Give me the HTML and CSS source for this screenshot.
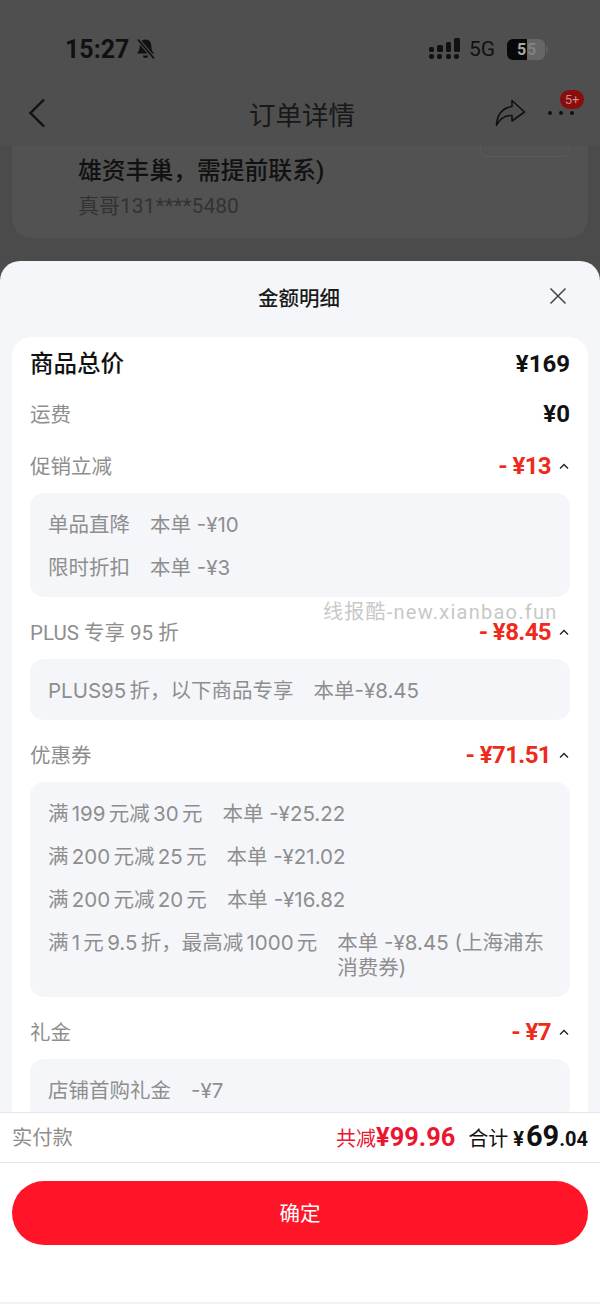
FILE: index.html
```html
<!DOCTYPE html>
<html lang="zh-CN">
<head>
    <meta charset="UTF-8">
    <meta name="viewport" content="width=device-width, initial-scale=1.0">
    <title>金额明细</title>
    <link rel="stylesheet" href="styles.css">
</head>
<body>
    <div class="phone">
        <!-- dimmed page behind the sheet -->
        <div class="status-bar">
            <div class="status-left">
                <span class="clock">15:27</span>
                <svg class="bell" width="21" height="22" viewBox="0 0 21 22">
                    <path d="M10.5 1.5c-3.8 0-5.8 2.8-5.8 6.500 0 3.800-1.200 5.500-2.900 7.500h17.400c-1.700-2-2.900-3.700-2.900-7.500 0-3.700-2-6.500-5.800-6.500z" fill="#111"/>
                    <path d="M8 17.5h5a2.500 2.500 0 0 1-5 0z" fill="#111"/>
                    <path d="M3 1.500l16 19" stroke="#4f4f4f" stroke-width="3.600"/>
                    <path d="M3 1.500l16 19" stroke="#111" stroke-width="1.800"/>
                </svg>
            </div>
            <div class="status-right">
                <svg class="signal" width="31" height="22" viewBox="0 0 31 22">
                    <g fill="#111">
                        <rect x="0" y="9" width="5" height="5" rx="1.500"/>
                        <rect x="8" y="7" width="6" height="7" rx="1.500"/>
                        <rect x="17" y="4" width="5" height="10" rx="1.500"/>
                        <rect x="25" y="0" width="6" height="14" rx="1.500"/>
                        <rect x="0" y="16" width="5" height="5" rx="2"/>
                        <rect x="8" y="16" width="5" height="5" rx="2"/>
                        <rect x="17" y="16" width="5" height="5" rx="2"/>
                        <rect x="25" y="16" width="5" height="5" rx="2"/>
                    </g>
                </svg>
                <span class="net">5G</span>
                <div class="battery">
                    <span class="battery-fill">5</span><span class="battery-rest">5</span>
                </div>
                <span class="battery-cap"></span>
            </div>
        </div>

        <div class="nav">
            <svg class="back" width="18" height="30" viewBox="0 0 18 30">
                <path d="M16 1.500L2.500 15 16 28.500" fill="none" stroke="#111" stroke-width="2.400"/>
            </svg>
            <div class="nav-title">订单详情</div>
            <svg class="share" width="31" height="28" viewBox="0 0 31 28">
                <path d="M17 1.500L29.500 13 17 22v-5.500C10 16 5 19.500 1.500 26.500 2 16 7 9 17 7.500z" fill="none" stroke="#111" stroke-width="1.600" stroke-linejoin="round"/>
            </svg>
            <div class="more">
                <i></i><i></i><i></i>
                <span class="badge">5+</span>
            </div>
        </div>

        <div class="page">
            <div class="ghost-button"></div>
            <div class="address-card">
                <div class="address">雄资丰巢，需提前联系)</div>
                <div class="contact">真哥131****5480</div>
            </div>
        </div>

        <!-- bottom sheet -->
        <div class="sheet">
            <div class="sheet-head">
                <div class="sheet-title">金额明细</div>
                <svg class="close" width="18" height="18" viewBox="0 0 18 18">
                    <path d="M1.500 1.500l15 15M16.500 1.500l-15 15" stroke="#444" stroke-width="1.500"/>
                </svg>
            </div>

            <div class="sheet-body">
                <div class="detail-card">
                    <div class="row row-total">
                        <span class="row-name">商品总价</span>
                        <span class="row-price">¥169</span>
                    </div>
                    <div class="row">
                        <span class="row-name">运费</span>
                        <span class="row-price">¥0</span>
                    </div>

                    <div class="row row-open">
                        <span class="row-name">促销立减</span>
                        <span class="row-minus">- ¥13<svg class="caret" width="10" height="6" viewBox="0 0 10 6"><path d="M1 5.500l4-4 4 4" fill="none" stroke="#222" stroke-width="1.400"/></svg></span>
                    </div>
                    <div class="panel">
                        <div class="item"><span class="item-name">单品直降</span><span>本单 -¥10</span></div>
                        <div class="item"><span class="item-name">限时折扣</span><span>本单 -¥3</span></div>
                    </div>

                    <div class="row row-open">
                        <span class="row-name">PLUS 专享 95 折</span>
                        <span class="row-minus">- ¥8.45<svg class="caret" width="10" height="6" viewBox="0 0 10 6"><path d="M1 5.500l4-4 4 4" fill="none" stroke="#222" stroke-width="1.400"/></svg></span>
                    </div>
                    <div class="panel">
                        <div class="item"><span class="item-name">PLUS95 折，以下商品专享</span><span>本单-¥8.45</span></div>
                    </div>

                    <div class="row row-open">
                        <span class="row-name">优惠券</span>
                        <span class="row-minus">- ¥71.51<svg class="caret" width="10" height="6" viewBox="0 0 10 6"><path d="M1 5.500l4-4 4 4" fill="none" stroke="#222" stroke-width="1.400"/></svg></span>
                    </div>
                    <div class="panel">
                        <div class="item"><span class="item-name">满 199 元减 30 元</span><span>本单 -¥25.22</span></div>
                        <div class="item"><span class="item-name">满 200 元减 25 元</span><span>本单 -¥21.02</span></div>
                        <div class="item"><span class="item-name">满 200 元减 20 元</span><span>本单 -¥16.82</span></div>
                        <div class="item"><span class="item-name">满 1 元 9.5 折，最高减 1000 元</span><span class="item-wrap">本单 -¥8.45 (上海浦东消费券)</span></div>
                    </div>

                    <div class="row row-open">
                        <span class="row-name">礼金</span>
                        <span class="row-minus">- ¥7<svg class="caret" width="10" height="6" viewBox="0 0 10 6"><path d="M1 5.500l4-4 4 4" fill="none" stroke="#222" stroke-width="1.400"/></svg></span>
                    </div>
                    <div class="panel">
                        <div class="item"><span class="item-name">店铺首购礼金</span><span>-¥7</span></div>
                    </div>
                </div>
            </div>

            <div class="summary">
                <span class="summary-label">实付款</span>
                <div class="summary-right">
                    <span class="saved">共减<b>¥99.96</b></span>
                    <span class="total">合计 <b class="total-yen">¥</b><b class="total-int">69</b><b class="total-dec">.04</b></span>
                </div>
            </div>
            <div class="sheet-foot">
                <button class="confirm">确定</button>
            </div>
        </div>

        <div class="watermark">线报酷-new.xianbao.fun</div>
    </div>
</body>
</html>
```

FILE: styles.css
```css
* {
    box-sizing: border-box;
}

html, body {
    margin: 0;
    padding: 0;
}

body {
    background-color: #4f4f4f;
    font-family: Roboto, "Noto Sans CJK SC", sans-serif;
}

.phone {
    position: relative;
    width: 600px;
    height: 1304px;
    overflow: hidden;
    background-color: #4e4e4e;
}

/* status bar */
.status-bar {
    height: 80px;
    padding: 35px 52px 0 65px;
    display: flex;
    justify-content: space-between;
    align-items: flex-start;
    background-color: #4f4f4f;
}

.status-left,
.status-right {
    display: flex;
    align-items: center;
    height: 28px;
}

.clock {
    font-size: 25px;
    font-weight: 700;
    color: #111;
}

.bell {
    margin-left: 6px;
}

.net {
    margin-left: 9px;
    font-size: 21px;
    color: #111;
}

.battery {
    margin-left: 12px;
    width: 38px;
    height: 21px;
    display: flex;
    border-radius: 6px;
    overflow: hidden;
    font-size: 16px;
    font-weight: 700;
    line-height: 21px;
}

.battery-fill {
    width: 20px;
    padding-left: 10px;
    background-color: #080808;
    color: #a8a8a8;
}

.battery-rest {
    flex: 1;
    background-color: #666;
    color: #808080;
}

.battery-cap {
    width: 2px;
    height: 7px;
    margin-left: 1px;
    border-radius: 0 2px 2px 0;
    background-color: #5f5f5f;
}

/* nav */
.nav {
    height: 66px;
    padding: 0 28px;
    display: flex;
    align-items: center;
    background-color: #4f4f4f;
    position: relative;
    z-index: 1;
}

.nav-title {
    flex: 1;
    text-align: center;
    font-size: 26.5px;
    color: #181818;
    padding-left: 63px;
}

.share {
    margin-right: 22px;
}

.more {
    width: 26px;
    display: flex;
    justify-content: space-between;
    position: relative;
    margin-right: -2px;
}

.more i {
    width: 4px;
    height: 4px;
    border-radius: 50%;
    background-color: #111;
}

.badge {
    position: absolute;
    left: 12px;
    top: -21px;
    width: 24px;
    height: 19px;
    border-radius: 10px;
    background-color: #8a0c0c;
    color: #c98a8a;
    font-size: 13px;
    line-height: 19px;
    text-align: center;
}

/* page behind */
.page {
    position: relative;
    height: 115px;
    background-color: #4b4b4b;
}

.ghost-button {
    position: absolute;
    left: 480px;
    top: -10px;
    width: 90px;
    height: 21px;
    border: 1px solid #5a5a5a;
    border-radius: 6px;
}

.address-card {
    margin: 0 12px;
    height: 92px;
    padding: 10px 0 0 66px;
    background-color: #525252;
    border-radius: 0 0 20px 20px;
}

.address {
    font-size: 23.8px;
    font-weight: 500;
    line-height: 30px;
    color: #111;
}

.contact {
    margin-top: 6px;
    font-size: 21px;
    line-height: 28px;
    color: #333;
}

/* sheet */
.sheet {
    position: absolute;
    left: 0;
    top: 261px;
    width: 600px;
    height: 1043px;
    display: flex;
    flex-direction: column;
    background-color: #f5f6fa;
    border-radius: 20px 20px 0 0;
}

.sheet-head {
    height: 76px;
    flex-shrink: 0;
    display: flex;
    align-items: center;
    justify-content: center;
    position: relative;
}

.sheet-title {
    padding: 0 2px 4px 0;
    font-size: 20.5px;
    font-weight: 500;
    color: #1a1a1a;
}

.close {
    position: absolute;
    right: 33px;
    top: 26px;
}

.sheet-body {
    flex: 1;
    overflow: hidden;
    padding: 0 12px;
}

.detail-card {
    background-color: #fff;
    border-radius: 20px 20px 0 0;
    padding: 0 18px;
}

.row {
    height: 52px;
    display: flex;
    justify-content: space-between;
    align-items: center;
}

.row-total {
    height: 51px;
    padding-top: 3px;
}

.row-open {
    height: 53px;
}

.row-name {
    padding-bottom: 2px;
    font-size: 20.5px;
    color: #8e8e8e;
}

.row-open .row-name {
    padding-bottom: 4px;
}

.row-total .row-name {
    padding-bottom: 4px;
    font-size: 23.5px;
    font-weight: 500;
    color: #111;
}

.row-price {
    font-size: 24px;
    font-weight: 700;
    color: #111;
}

.row-minus {
    display: flex;
    align-items: center;
    padding-bottom: 2px;
    font-size: 24px;
    line-height: 20px;
    font-weight: 700;
    letter-spacing: -0.6px;
    color: #ee2a1c;
    white-space: pre;
}

.caret {
    margin-left: 8px;
    margin-right: 1px;
}

.panel {
    margin-bottom: 9px;
    padding: 9px 18px;
    background-color: #f5f6fa;
    border-radius: 14px;
}

.item {
    display: flex;
    padding: 10px 0 8px;
    font-family: Inter, "Noto Sans CJK SC", sans-serif;
    font-size: 20.5px;
    line-height: 25px;
    color: #8e8e8e;
}

.item-name {
    flex-shrink: 0;
    margin-right: 20px;
    word-spacing: -2.5px;
}

.item-wrap {
    flex: 1;
}

/* footer */
.summary {
    height: 51px;
    flex-shrink: 0;
    padding: 0 12px 4px;
    display: flex;
    justify-content: space-between;
    align-items: center;
    background-color: #fff;
    border-top: 1px solid #e6e6e6;
    border-bottom: 1px solid #e2e2e2;
}

.summary-label {
    font-size: 20.3px;
    color: #8e8e8e;
}

.summary-right {
    display: flex;
    align-items: baseline;
}

.saved {
    font-size: 20px;
    color: #ec1530;
}

.saved b {
    font-size: 25.4px;
    font-weight: 700;
}

.total {
    margin-left: 13px;
    font-size: 20px;
    color: #111;
}

.total-yen {
    margin-right: 2px;
    font-size: 20px;
    font-weight: 700;
}

.total-int {
    font-size: 29px;
    font-weight: 700;
}

.total-dec {
    font-size: 20px;
    font-weight: 700;
}

.sheet-foot {
    height: 141px;
    flex-shrink: 0;
    padding: 18px 12px 0;
    background-color: #fff;
    border-bottom: 2px solid #f2f2f2;
}

.confirm {
    display: block;
    width: 100%;
    height: 64px;
    padding: 0 0 2px;
    border: none;
    border-radius: 32px;
    background-color: #ff1428;
    color: #fff;
    font-family: inherit;
    font-size: 20.5px;
}

.watermark {
    position: absolute;
    left: 323px;
    top: 603px;
    font-size: 20px;
    line-height: 18px;
    color: #c8c8c8;
    letter-spacing: 1.25px;
}
```
